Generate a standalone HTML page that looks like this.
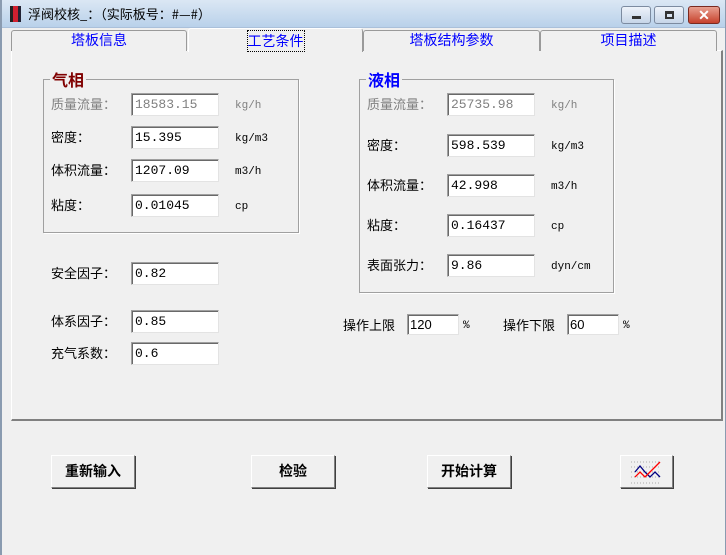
<!DOCTYPE html>
<html><head><meta charset="utf-8"><style>
*{margin:0;padding:0;box-sizing:border-box}
body{width:726px;height:555px;background:#f0f0f0;position:relative;overflow:hidden;font-family:"Liberation Sans","Noto Sans CJK SC",sans-serif;font-size:13px;color:#000}
.a{position:absolute}
.t{position:absolute;white-space:nowrap;font-family:"Noto Sans CJK SC",sans-serif;font-size:13px;line-height:16px}
.in{position:absolute;height:23px;background:#fff;border-top:1px solid #a0a0a0;border-left:1px solid #a0a0a0;border-right:1px solid #e3e3e3;border-bottom:1px solid #e3e3e3;box-shadow:inset 1px 1px 0 #696969;font-family:"Liberation Mono",monospace;font-size:13px;line-height:21px;padding-left:3px}
.g{color:#808080}
.u{position:absolute;font-family:"Liberation Mono",monospace;font-size:11px;white-space:nowrap}
.grp{position:absolute;border:1px solid #a0a0a0;box-shadow:1px 1px 0 #fff}
.lg{position:absolute;background:#f0f0f0;font-family:"Noto Sans CJK SC",sans-serif;font-weight:bold;font-size:16px;line-height:18px;padding:0 2px}
.tab{position:absolute;top:30px;height:21px;border:1px solid #9a9a9a;border-bottom:none;border-radius:3px 3px 0 0;background:#f0f0f0;color:#0000ff;text-align:center;font-family:"Noto Sans CJK SC",sans-serif;font-size:14px;line-height:19px}
.btn{position:absolute;top:455px;height:33px;background:#f0f0f0;border-top:1px solid #fff;border-left:1px solid #fff;border-right:1px solid #808080;border-bottom:1px solid #808080;box-shadow:1px 1px 0 #404040;text-align:center;font-family:"Noto Sans CJK SC",sans-serif;font-weight:bold;font-size:14px;line-height:31px}
</style></head><body>
<div class="a" style="left:0;top:0;width:726px;height:28px;background:linear-gradient(#dbe7f4,#b9d1ea);border-bottom:1px solid #aac0da"></div>
<div class="a" style="left:0;top:0;width:726px;height:555px;border-left:2px solid #8a9bb0;border-right:1px solid #8a9bb0;pointer-events:none"></div>
<div class="a" style="left:10px;top:6px;width:11px;height:16px;background:linear-gradient(90deg,#222 0 3px,#d02030 3px 8px,#223 8px)"></div>
<div class="t" style="left:28px;top:6px;font-size:13px">浮阀校核_：（实际板号：#—#）</div>
<div class="a" style="left:621px;top:6px;width:30px;height:18px;border:1px solid #7c8ba0;border-radius:3px;background:linear-gradient(#eef3fa,#c6d5e8)"><div class="a" style="left:10px;top:9px;width:9px;height:3px;background:#333"></div></div>
<div class="a" style="left:654px;top:6px;width:30px;height:18px;border:1px solid #7c8ba0;border-radius:3px;background:linear-gradient(#eef3fa,#c6d5e8)"><div class="a" style="left:10px;top:4px;width:9px;height:8px;border:2px solid #333;border-top-width:3px"></div></div>
<div class="a" style="left:688px;top:6px;width:32px;height:18px;border:1px solid #7a2a20;border-radius:3px;background:linear-gradient(#e8a090,#c7412c);color:#fff;font-weight:bold;text-align:center;line-height:16px;font-size:14px">✕</div>

<div class="a" style="left:11px;top:50px;width:712px;height:371px;border-top:1px solid #fff;border-left:1px solid #fff;border-right:2px solid #808080;border-bottom:2px solid #808080"></div>
<div class="tab" style="left:11px;width:176px">塔板信息</div>
<div class="tab" style="left:363px;width:177px">塔板结构参数</div>
<div class="tab" style="left:540px;width:177px">项目描述</div>
<div class="tab" style="left:188px;top:28px;height:24px;width:175px;border-color:#fff #9a9a9a #9a9a9a #fff;line-height:24px"><span style="outline:1px dotted #000">工艺条件</span></div>

<div class="grp" style="left:43px;top:79px;width:256px;height:154px"></div>
<div class="lg" style="left:50px;top:70px;color:#800000">气相</div>
<div class="t g" style="left:51px;top:96px">质量流量：</div><div class="in g" style="left:131px;top:93px;width:88px">18583.15</div><div class="u g" style="left:235px;top:100px">kg/h</div>
<div class="t" style="left:51px;top:129px">密度：</div><div class="in" style="left:131px;top:126px;width:88px">15.395</div><div class="u" style="left:235px;top:133px">kg/m3</div>
<div class="t" style="left:51px;top:162px">体积流量：</div><div class="in" style="left:131px;top:159px;width:88px">1207.09</div><div class="u" style="left:235px;top:166px">m3/h</div>
<div class="t" style="left:51px;top:197px">粘度：</div><div class="in" style="left:131px;top:194px;width:88px">0.01045</div><div class="u" style="left:235px;top:201px">cp</div>

<div class="grp" style="left:359px;top:79px;width:255px;height:214px"></div>
<div class="lg" style="left:366px;top:70px;color:#0000ff">液相</div>
<div class="t g" style="left:367px;top:96px">质量流量：</div><div class="in g" style="left:447px;top:93px;width:88px">25735.98</div><div class="u g" style="left:551px;top:100px">kg/h</div>
<div class="t" style="left:367px;top:137px">密度：</div><div class="in" style="left:447px;top:134px;width:88px">598.539</div><div class="u" style="left:551px;top:141px">kg/m3</div>
<div class="t" style="left:367px;top:177px">体积流量：</div><div class="in" style="left:447px;top:174px;width:88px">42.998</div><div class="u" style="left:551px;top:181px">m3/h</div>
<div class="t" style="left:367px;top:217px">粘度：</div><div class="in" style="left:447px;top:214px;width:88px">0.16437</div><div class="u" style="left:551px;top:221px">cp</div>
<div class="t" style="left:367px;top:257px">表面张力：</div><div class="in" style="left:447px;top:254px;width:88px">9.86</div><div class="u" style="left:551px;top:261px">dyn/cm</div>

<div class="t" style="left:51px;top:265px">安全因子：</div><div class="in" style="left:131px;top:262px;width:88px">0.82</div>
<div class="t" style="left:51px;top:313px">体系因子：</div><div class="in" style="left:131px;top:310px;width:88px">0.85</div>
<div class="t" style="left:51px;top:345px">充气系数：</div><div class="in" style="left:131px;top:342px;width:88px">0.6</div>

<div class="t" style="left:343px;top:317px">操作上限</div><div class="in" style="left:407px;top:314px;width:52px;height:21px;line-height:19px;font-family:'Liberation Sans',sans-serif;padding-left:2px">120</div><div class="u" style="left:463px;top:320px">%</div>
<div class="t" style="left:503px;top:317px">操作下限</div><div class="in" style="left:567px;top:314px;width:52px;height:21px;line-height:19px;font-family:'Liberation Sans',sans-serif;padding-left:2px">60</div><div class="u" style="left:623px;top:320px">%</div>

<div class="btn" style="left:51px;width:84px">重新输入</div>
<div class="btn" style="left:251px;width:84px">检验</div>
<div class="btn" style="left:427px;width:84px">开始计算</div>
<div class="btn" style="left:620px;width:53px">
<svg width="50" height="30" style="position:absolute;left:0;top:0">
<g stroke="#aaa" stroke-dasharray="1 2"><line x1="10" y1="6" x2="40" y2="6"/><line x1="10" y1="11" x2="40" y2="11"/><line x1="10" y1="16" x2="40" y2="16"/><line x1="10" y1="21" x2="40" y2="21"/><line x1="10" y1="27" x2="40" y2="27"/></g>
<polyline points="14,16 19,10 24,16 29,21 34,16 39,21" fill="none" stroke="#000080" stroke-width="1.3"/>
<polyline points="14,21 19,16 24,21 29,16 34,11 39,6" fill="none" stroke="#f00" stroke-width="1.3"/>
</svg></div>
</body></html>
